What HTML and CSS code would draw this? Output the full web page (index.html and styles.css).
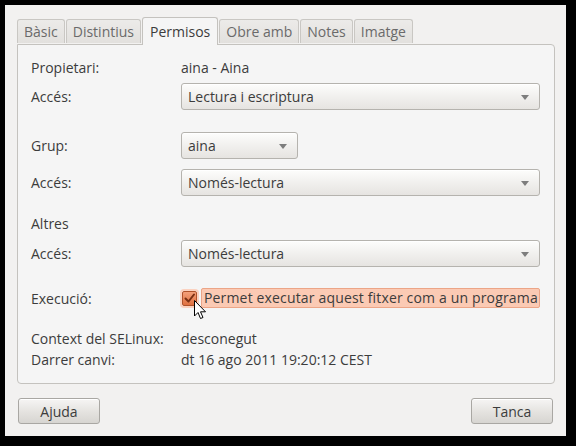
FILE: index.html
```html
<!DOCTYPE html>
<html>
<head>
<meta charset="utf-8">
<link rel="stylesheet" href="styles.css">
</head>
<body>
<div class="window">
  <div class="notebook">
    <div class="tabs">
      <div class="tab">Bàsic</div>
      <div class="tab">Distintius</div>
      <div class="tab active">Permisos</div>
      <div class="tab">Obre amb</div>
      <div class="tab">Notes</div>
      <div class="tab">Imatge</div>
    </div>
    <div class="page">
      <div class="row r-owner"><span class="lbl">Propietari:</span><span class="val">aina - Aina</span></div>
      <div class="row r-combo r-a1"><span class="lbl">Accés:</span><div class="combo wide"><span>Lectura i escriptura</span><i class="arrow"></i></div></div>
      <div class="row r-combo r-group"><span class="lbl">Grup:</span><div class="combo narrow"><span>aina</span><i class="arrow"></i></div></div>
      <div class="row r-combo r-a2"><span class="lbl">Accés:</span><div class="combo wide"><span>Només-lectura</span><i class="arrow"></i></div></div>
      <div class="row r-text r-others"><span class="lbl">Altres</span></div>
      <div class="row r-combo r-a3"><span class="lbl">Accés:</span><div class="combo wide"><span>Només-lectura</span><i class="arrow"></i></div></div>
      <div class="row r-exec"><span class="lbl">Execució:</span>
        <div class="check-wrap">
          <span class="checkbox"><svg width="13" height="13" viewBox="0 0 13 13"><path d="M2.5 6.5 L5.5 9.5 L11 2.5" fill="none" stroke="#7a2f12" stroke-width="2" stroke-linecap="round" stroke-linejoin="round"/></svg></span>
          <span class="check-label">Permet executar aquest fitxer com a un programa</span>
        </div>
      </div>
      <div class="row r-text r-context"><span class="lbl">Context del SELinux:</span><span class="val">desconegut</span></div>
      <div class="row r-text r-date"><span class="lbl">Darrer canvi:</span><span class="val">dt 16 ago 2011 19:20:12 CEST</span></div>
    </div>
  </div>
  <div class="buttons">
    <button class="btn">Ajuda</button>
    <button class="btn">Tanca</button>
  </div>
</div>
<svg class="cursor" width="13" height="21" viewBox="0 0 13 21"><path d="M0.5 0.5 L0.5 16 L4 12.5 L6.5 18.5 L9 17.5 L6.5 11.8 L11.5 11.8 Z" fill="#fff" stroke="#000" stroke-width="1" stroke-linejoin="round"/></svg>
</body>
</html>
```
FILE: styles.css
```css
html, body {
  margin: 0;
  padding: 0;
}
body {
  width: 576px;
  height: 446px;
  background: #000;
  font-family: "Open Sans", "Noto Sans", sans-serif;
  font-size: 14px;
  color: #3c3c3c;
  position: relative;
  overflow: hidden;
}
.window {
  position: absolute;
  left: 5px;
  top: 5px;
  width: 561px;
  height: 431px;
  box-sizing: border-box;
  background: #f2f1f0;
  padding: 11px 11px 0 12px;
  display: flex;
  flex-direction: column;
}
.notebook {
  display: flex;
  flex-direction: column;
}
.tabs {
  display: flex;
  align-items: flex-end;
  height: 28px;
  gap: 1px;
  position: relative;
  z-index: 1;
}
.tab {
  height: 24px;
  box-sizing: border-box;
  padding: 0 6px;
  line-height: 24px;
  border: 1px solid #c9c7c3;
  border-bottom: none;
  border-radius: 3px 3px 0 0;
  background: linear-gradient(#ecebe9, #e2e0dd);
  color: #6a6a6a;
  margin-bottom: 1px;
}
.tab.active {
  height: 28px;
  line-height: 27px;
  background: #f5f5f5;
  color: #3c3c3c;
  margin-bottom: -1px;
  padding: 0 7px;
  border-color: #c4c2be;
}
.page {
  height: 340px;
  box-sizing: border-box;
  border: 1px solid #c4c2be;
  border-radius: 0 4px 4px 4px;
  background: #f5f5f5;
  padding: 11px 14px 0 13px;
  display: flex;
  flex-direction: column;
}
.row {
  display: flex;
  align-items: center;
}
.lbl {
  width: 150px;
  flex: none;
}
.val {
  white-space: nowrap;
}
.r-owner { height: 22px; }
.r-combo { height: 27px; }
.r-text { height: 21px; }
.r-a1 { margin-top: 5px; }
.r-group { margin-top: 22px; }
.r-a2 { margin-top: 10px; }
.r-others { margin-top: 17px; }
.r-a3 { margin-top: 6px; }
.r-exec { height: 20px; margin-top: 21px; }
.r-context { margin-top: 20px; }
.r-date { margin-top: 0; }

.combo {
  height: 27px;
  box-sizing: border-box;
  border: 1px solid #b5b3ae;
  border-radius: 3px;
  background: linear-gradient(#fdfdfc, #f1f0ee 50%, #e6e4e1);
  display: flex;
  align-items: center;
  justify-content: space-between;
  padding: 0 10px 0 6px;
  box-shadow: inset 0 1px 0 #fff;
  color: #3c3c3c;
}
.combo.wide { width: 359px; }
.combo.narrow { width: 117px; }
.arrow {
  width: 0;
  height: 0;
  border-left: 4px solid transparent;
  border-right: 4px solid transparent;
  border-top: 5px solid #7d7d7d;
  margin-top: 2px;
}
.check-wrap {
  display: flex;
  align-items: center;
  height: 20px;
}
.checkbox {
  width: 15px;
  height: 15px;
  box-sizing: border-box;
  margin-left: 1px;
  border: 1px solid #b0522a;
  border-radius: 2px;
  background: linear-gradient(#f3a07a, #e0703f);
  box-shadow: 0 0 0 2px #fbd2c0;
  display: flex;
  align-items: center;
  justify-content: center;
}
.checkbox svg { display: block; }
.check-label {
  margin-left: 4px;
  height: 20px;
  box-sizing: border-box;
  line-height: 18px;
  padding: 0 1px 0 2px;
  background: #fbcab4;
  border: 1px solid #eca587;
  border-radius: 2px;
  white-space: nowrap;
  letter-spacing: 0.16px;
}
.buttons {
  margin-top: 14px;
  display: flex;
  justify-content: space-between;
  padding: 0 2px 0 1px;
}
.btn {
  width: 82px;
  height: 26px;
  box-sizing: border-box;
  border: 1px solid #a9a7a3;
  border-radius: 3px;
  background: linear-gradient(#f6f5f4, #e4e2df 55%, #d7d5d1);
  box-shadow: inset 0 1px 0 #fff;
  font-family: inherit;
  font-size: 14px;
  color: #3c3c3c;
  padding: 0;
}
.cursor {
  position: absolute;
  left: 194px;
  top: 300px;
}
```
